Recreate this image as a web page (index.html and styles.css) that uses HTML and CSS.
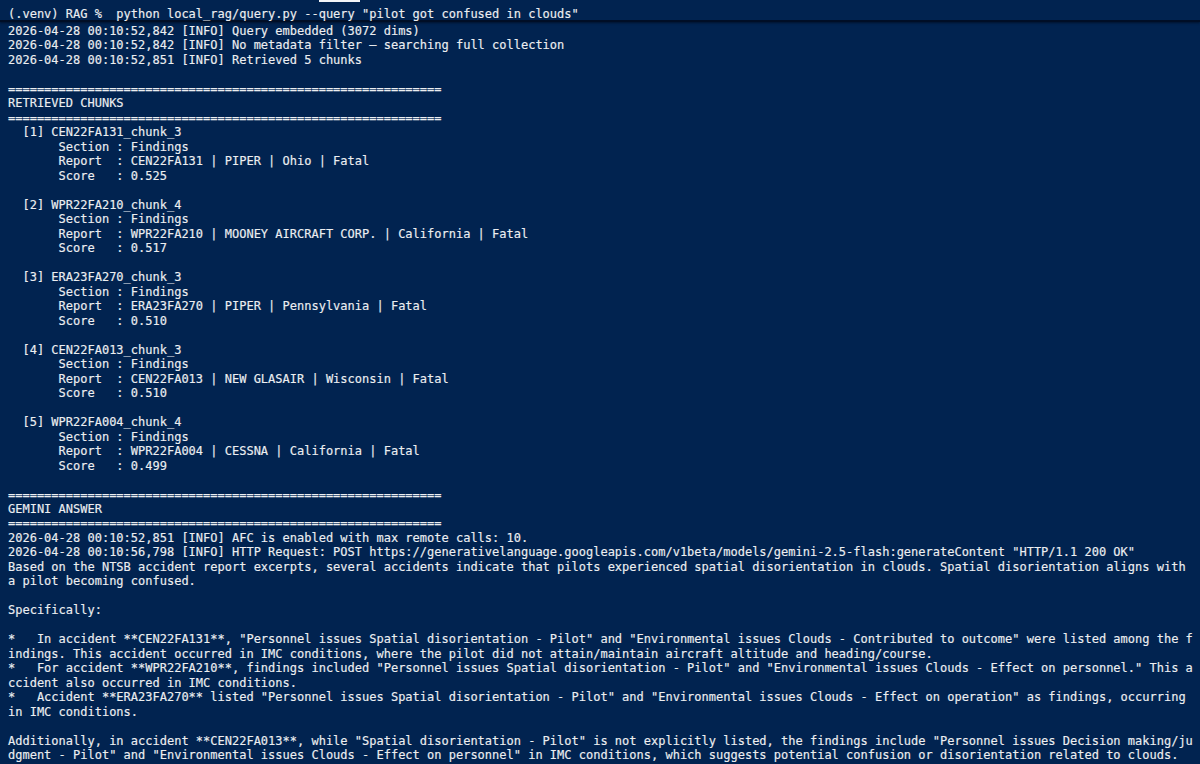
FILE: index.html
```html
<!DOCTYPE html>
<html lang="en">
<head>
<meta charset="utf-8">
<title>Terminal — query.py</title>
<link rel="stylesheet" href="styles.css">
</head>
<body>
<div class="terminal">
  <div class="marker"></div>
  <header class="prompt"><pre class="line">(.venv) RAG %  python local_rag/query.py --query "pilot got confused in clouds"</pre></header>
  <pre class="out">2026-04-28 00:10:52,842 [INFO] Query embedded (3072 dims)
2026-04-28 00:10:52,842 [INFO] No metadata filter — searching full collection
2026-04-28 00:10:52,851 [INFO] Retrieved 5 chunks

============================================================
RETRIEVED CHUNKS
============================================================
  [1] CEN22FA131_chunk_3
       Section : Findings
       Report  : CEN22FA131 | PIPER | Ohio | Fatal
       Score   : 0.525

  [2] WPR22FA210_chunk_4
       Section : Findings
       Report  : WPR22FA210 | MOONEY AIRCRAFT CORP. | California | Fatal
       Score   : 0.517

  [3] ERA23FA270_chunk_3
       Section : Findings
       Report  : ERA23FA270 | PIPER | Pennsylvania | Fatal
       Score   : 0.510

  [4] CEN22FA013_chunk_3
       Section : Findings
       Report  : CEN22FA013 | NEW GLASAIR | Wisconsin | Fatal
       Score   : 0.510

  [5] WPR22FA004_chunk_4
       Section : Findings
       Report  : WPR22FA004 | CESSNA | California | Fatal
       Score   : 0.499

============================================================
GEMINI ANSWER
============================================================
2026-04-28 00:10:52,851 [INFO] AFC is enabled with max remote calls: 10.
2026-04-28 00:10:56,798 [INFO] HTTP Request: POST https://generativelanguage.googleapis.com/v1beta/models/gemini-2.5-flash:generateContent "HTTP/1.1 200 OK"
Based on the NTSB accident report excerpts, several accidents indicate that pilots experienced spatial disorientation in clouds. Spatial disorientation aligns with 
a pilot becoming confused.

Specifically:

*   In accident **CEN22FA131**, "Personnel issues Spatial disorientation - Pilot" and "Environmental issues Clouds - Contributed to outcome" were listed among the f
indings. This accident occurred in IMC conditions, where the pilot did not attain/maintain aircraft altitude and heading/course.
*   For accident **WPR22FA210**, findings included "Personnel issues Spatial disorientation - Pilot" and "Environmental issues Clouds - Effect on personnel." This a
ccident also occurred in IMC conditions.
*   Accident **ERA23FA270** listed "Personnel issues Spatial disorientation - Pilot" and "Environmental issues Clouds - Effect on operation" as findings, occurring 
in IMC conditions.

Additionally, in accident **CEN22FA013**, while "Spatial disorientation - Pilot" is not explicitly listed, the findings include "Personnel issues Decision making/ju
dgment - Pilot" and "Environmental issues Clouds - Effect on personnel" in IMC conditions, which suggests potential confusion or disorientation related to clouds.</pre>
</div>
</body>
</html>
```
FILE: styles.css
```css
html, body {
  margin: 0;
  padding: 0;
  background: #012350;
}

.terminal {
  position: relative;
  width: 1200px;
  height: 764px;
  overflow: hidden;
  background: #012350;
  color: #eceef1;
  font-family: "DejaVu Sans Mono", "Liberation Mono", monospace;
  font-size: 12px;
  line-height: 14.48px;
  -webkit-text-stroke: 0.15px #eceef1;
}

.marker {
  position: absolute;
  left: 319px;
  top: 0;
  width: 41px;
  height: 2px;
  background: #f2f4f7;
}

.prompt {
  height: 22px;
  box-sizing: border-box;
  padding: 7px 0 0 8px;
  border-bottom: 2px solid #000e26;
  box-shadow: 0 1px 2px rgba(0, 8, 24, 0.6);
}

.line,
.out {
  margin: 0;
  font: inherit;
  white-space: pre;
}

.out {
  padding: 2px 0 0 8px;
}
```
